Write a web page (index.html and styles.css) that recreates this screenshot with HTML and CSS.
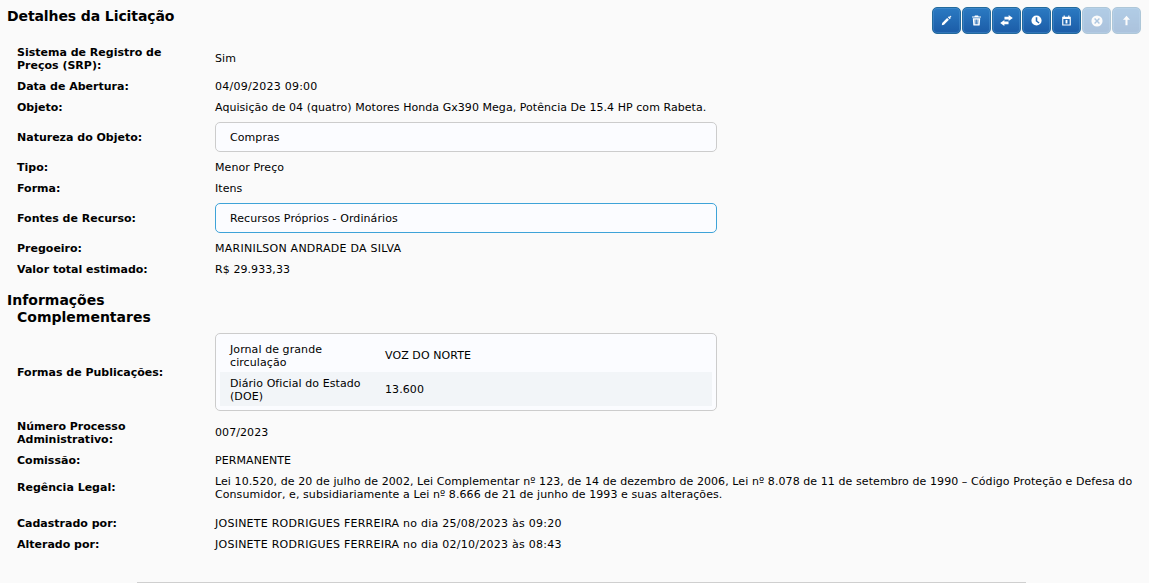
FILE: index.html
```html
<!DOCTYPE html>
<html lang="pt">
<head>
<meta charset="utf-8">
<title>Detalhes da Licitação</title>
<link rel="stylesheet" href="styles.css">
</head>
<body>
<main class="panel">
  <header class="top">
    <h2 class="title">Detalhes da Licitação</h2>
    <div class="actions">
      <button class="btn" type="button" aria-label="Editar"><svg viewBox="0 0 14 14" class="ico"><path d="M1 13l.5-2.800 6.300-6.300 2.300 2.300-6.300 6.300z"/><path d="M8.800 3l1.400-1.400 2.300 2.300-1.400 1.400z"/><path d="M12 .6l.5 1 1 .5-1 .5-.5 1-.5-1-1-.5 1-.5z"/></svg></button>
      <button class="btn" type="button" aria-label="Excluir"><svg viewBox="0 0 14 14" class="ico"><path d="M5 .6h4l.7 1.200h3v1.500H1.300V1.800h3z"/><path fill-rule="evenodd" d="M2.300 4.200h9.400l-.6 8.400a1 1 0 0 1-1 .9H3.900a1 1 0 0 1-1-.9zM4.600 5.600l.3 6.300h1l-.2-6.300zM6.500 5.600v6.300h1V5.600zM8.400 5.600l-.3 6.300h1l.3-6.300z"/></svg></button>
      <button class="btn swap" type="button" aria-label="Trocar"><svg viewBox="0 0 14 14" class="ico"><path d="M9.300 1.200l4.500 3.200-4.500 3.200V5.800H4.800V3h4.500z"/><path d="M4.700 6.400v1.800h4.500V11H4.700v1.800L.2 9.600z"/></svg></button>
      <button class="btn" type="button" aria-label="Histórico"><svg viewBox="0 0 14 14" class="ico"><path fill-rule="evenodd" d="M7 .5a6.500 6.500 0 1 1 0 13A6.500 6.500 0 0 1 7 .5zM6 2.800v5l3.800 3 1-1.300L8 7.200V2.800z"/></svg></button>
      <button class="btn" type="button" aria-label="Agenda"><svg viewBox="0 0 14 14" class="ico"><path fill-rule="evenodd" d="M3.300.6h1.500v1.500h4.400V.6h1.500v1.500H12.500v11.300H1.500V2.100h1.800zM3 5v7h8V5z"/><path d="M5.800 6.200h2.400v4.600H5.800z"/></svg></button>
      <button class="btn off wide" type="button" aria-label="Cancelar"><svg viewBox="0 0 14 14" class="ico"><path fill-rule="evenodd" d="M7 .5a6.500 6.500 0 1 1 0 13A6.500 6.500 0 0 1 7 .5zM4.800 3.600L3.600 4.800 5.800 7 3.600 9.200l1.200 1.200L7 8.200l2.200 2.200 1.200-1.200L8.200 7l2.200-2.200-1.200-1.200L7 5.800z"/></svg></button>
      <button class="btn off" type="button" aria-label="Enviar"><svg viewBox="0 0 14 14" class="ico"><path d="M7 1l4.500 5H8.300v7H5.700V6H2.500z"/></svg></button>
    </div>
  </header>

  <dl class="fields">
    <div class="row tall"><dt>Sistema de Registro de Preços (SRP):</dt><dd>Sim</dd></div>
    <div class="row"><dt>Data de Abertura:</dt><dd class="caps">04/09/2023 09:00</dd></div>
    <div class="row"><dt>Objeto:</dt><dd class="tight">Aquisição de 04 (quatro) Motores Honda Gx390 Mega, Potência De 15.4 HP com Rabeta.</dd></div>
    <div class="row boxed"><dt>Natureza do Objeto:</dt><dd><div class="box">Compras</div></dd></div>
    <div class="row"><dt>Tipo:</dt><dd>Menor Preço</dd></div>
    <div class="row"><dt>Forma:</dt><dd>Itens</dd></div>
    <div class="row boxed"><dt>Fontes de Recurso:</dt><dd><div class="box focus">Recursos Próprios - Ordinários</div></dd></div>
    <div class="row"><dt>Pregoeiro:</dt><dd class="caps">MARINILSON ANDRADE DA SILVA</dd></div>
    <div class="row"><dt>Valor total estimado:</dt><dd>R$ 29.933,33</dd></div>
  </dl>

  <h3 class="subtitle">Informações Complementares</h3>

  <dl class="fields">
    <div class="row boxed"><dt>Formas de Publicações:</dt><dd>
      <div class="box pubs">
        <div class="pub"><span class="pub-name">Jornal de grande circulação</span><span>VOZ DO NORTE</span></div>
        <div class="pub alt"><span class="pub-name">Diário Oficial do Estado (DOE)</span><span>13.600</span></div>
      </div>
    </dd></div>
    <div class="row tall"><dt>Número Processo Administrativo:</dt><dd>007/2023</dd></div>
    <div class="row"><dt>Comissão:</dt><dd>PERMANENTE</dd></div>
    <div class="row legal"><dt>Regência Legal:</dt><dd>Lei 10.520, de 20 de julho de 2002, Lei Complementar nº 123, de 14 de dezembro de 2006, Lei nº 8.078 de 11 de setembro de 1990 – Código Proteção e Defesa do Consumidor, e, subsidiariamente a Lei nº 8.666 de 21 de junho de 1993 e suas alterações.</dd></div>
    <div class="row"><dt>Cadastrado por:</dt><dd class="caps">JOSINETE RODRIGUES FERREIRA no dia 25/08/2023 às 09:20</dd></div>
    <div class="row"><dt>Alterado por:</dt><dd class="caps">JOSINETE RODRIGUES FERREIRA no dia 02/10/2023 às 08:43</dd></div>
  </dl>
  <div class="rule"></div>
</main>
</body>
</html>
```
FILE: styles.css
```css
* { box-sizing: border-box; }
html, body { height: 100%; }
body {
  margin: 0;
  background: #fafafa;
  color: #000;
  font-family: "DejaVu Sans", Verdana, sans-serif;
  font-size: 11px;
  line-height: 13px;
  overflow: hidden;
}
.panel { display: flex; flex-direction: column; height: 583px; padding-left: 7px; }
.top { display: flex; justify-content: space-between; align-items: flex-start; height: 41px; padding: 7px 8px 0 0; }
.title { margin: 1px 0 0; font-size: 14px; line-height: 17px; font-weight: bold; letter-spacing: -.1px; }
.actions { display: flex; gap: 1px; }
.btn {
  display: flex; align-items: center; justify-content: center;
  width: 29px; height: 27px; padding: 0;
  border: 1px solid #236a9c; border-radius: 5px;
  background: linear-gradient(#2b7ac2, #1b5ca7);
  box-shadow: inset 0 0 0 1px rgba(90, 160, 220, .35);
}
.btn.off { opacity: .35; }
.ico { width: 11px; height: 11px; fill: #fff; }
.btn.wide .ico { width: 12px; height: 12px; }
.btn.swap .ico { width: 13px; height: 13px; }
.fields { margin: 0; }
.row { display: grid; grid-template-columns: 198px 1fr; align-items: center; padding: 5px 0 3px 10px; }
.row.boxed { padding: 4.5px 0 4.5px 10px; }
.row.boxed dt { padding-top: 2px; }
.row.tall dd { padding-bottom: 2px; }
.row.legal { margin-bottom: 8px; }
.row.legal dt { padding-bottom: 2px; }
dt { font-weight: bold; padding-right: 20px; }
dd { margin: 0; padding-right: 10px; letter-spacing: .08px; }
dd.caps { letter-spacing: .25px; }
dd.tight { letter-spacing: .05px; }
.box {
  width: 502px; height: 30px; padding: 2px 14px 0;
  display: flex; align-items: center;
  background: #fbfcff; border: 1px solid #ccc; border-radius: 5px;
}
.box.focus { border-color: #3ea3d8; }
.box.pubs { height: 78px; padding: 4px; display: block; }
.pub { display: grid; grid-template-columns: 155px 1fr; align-items: center; height: 34px; padding: 2px 0 0 10px; }
.pub-name { padding-right: 20px; }
.pub.alt { background: #f2f5f8; }
.subtitle { margin: 13px 0 2px; padding-left: 10px; text-indent: -10px; width: 170px; font-size: 14px; line-height: 17px; font-weight: bold; }
.rule { margin: auto 0 0 130px; width: 889px; height: 1px; background: #cfcfcf; }
```
